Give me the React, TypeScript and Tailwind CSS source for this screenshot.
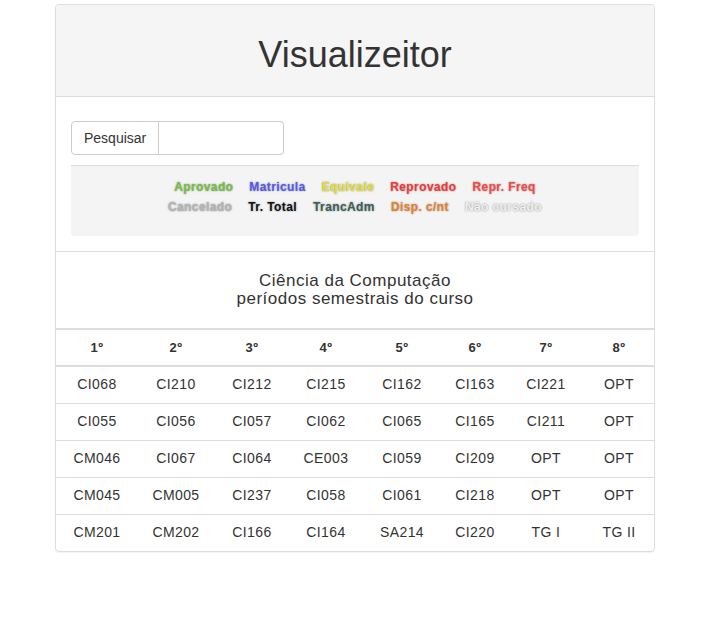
const legend1 = [
  { label: "Aprovado", color: "text-[#72c03c]" },
  { label: "Matricula", color: "text-[#5858ee]" },
  { label: "Equivale", color: "text-[#e3e030]" },
  { label: "Reprovado", color: "text-[#f03a3a]" },
  { label: "Repr. Freq", color: "text-[#f54848]" },
];

const legend2 = [
  { label: "Cancelado", color: "text-[#b4b4b4]" },
  { label: "Tr. Total", color: "text-[#111111]" },
  { label: "TrancAdm", color: "text-[#3b5f5a]" },
  { label: "Disp. c/nt", color: "text-[#e8822c]" },
  { label: "Não cursado", color: "text-[#f0f0f0]" },
];

const periodos = ["1º", "2º", "3º", "4º", "5º", "6º", "7º", "8º"];

// column widths measured from the layout
const colWidths = [82, 76, 76, 72, 80, 66, 76, 70];

const grade = [
  ["CI068", "CI210", "CI212", "CI215", "CI162", "CI163", "CI221", "OPT"],
  ["CI055", "CI056", "CI057", "CI062", "CI065", "CI165", "CI211", "OPT"],
  ["CM046", "CI067", "CI064", "CE003", "CI059", "CI209", "OPT", "OPT"],
  ["CM045", "CM005", "CI237", "CI058", "CI061", "CI218", "OPT", "OPT"],
  ["CM201", "CM202", "CI166", "CI164", "SA214", "CI220", "TG I", "TG II"],
];

const LegendRow = ({ items }: { items: { label: string; color: string }[] }) => (
  <div className="flex justify-center gap-[16px] h-[20px] leading-[20px]">
    {items.map((item) => (
      <span
        key={item.label}
        className={`${item.color} font-bold text-[12px] tracking-[0.4px] [text-shadow:0_0_2px_#888]`}
      >
        {item.label}
      </span>
    ))}
  </div>
);

export default function App() {
  return (
    <div className="min-h-[636px] bg-white font-['Liberation_Sans',Arial,sans-serif] text-[14px] text-[#333]">
      <div className="ml-[55px] w-[600px] pt-[4px]">
        <div className="border border-[#dddddd] rounded-[4px] shadow-[0_1px_1px_rgba(0,0,0,0.05)] overflow-hidden">
          {/* Heading */}
          <div className="bg-[#f5f5f5] border-b border-[#dddddd] h-[92px] flex items-center justify-center">
            <h1 className="text-[36px] leading-[40px] mt-[8px]">Visualizeitor</h1>
          </div>

          {/* Search + legend */}
          <div className="px-[15px] pt-[24px] pb-[15px] border-b border-[#dddddd]">
            <div className="flex w-[213px] h-[34px]">
              <span className="flex items-center px-[12px] border border-[#cccccc] rounded-l-[4px] bg-white text-[14px] text-[#333]">
                Pesquisar
              </span>
              <input
                className="flex-1 min-w-0 border border-l-0 border-[#cccccc] rounded-r-[4px] px-[12px] outline-none"
                type="text"
              />
            </div>
            <div className="mt-[10px] border-t border-[#dddddd] bg-[#f4f4f4] rounded-b-[4px] pt-[11px] pb-[19px]">
              <LegendRow items={legend1} />
              <LegendRow items={legend2} />
            </div>
          </div>

          {/* Curso */}
          <div className="pt-[20px] pb-[20px] text-center text-[17px] leading-[18px] tracking-[0.5px] text-[#333]">
            <div>Ciência da Computação</div>
            <div>períodos semestrais do curso</div>
          </div>

          <table className="w-full table-fixed border-collapse text-center tracking-[0.4px]">
            <colgroup>
              {colWidths.map((w, i) => (
                <col key={i} style={{ width: w }} />
              ))}
            </colgroup>
            <thead>
              <tr className="border-t-2 border-b-2 border-[#dddddd]">
                {periodos.map((p) => (
                  <th key={p} className="h-[37px] font-bold text-[13px]">
                    {p}
                  </th>
                ))}
              </tr>
            </thead>
            <tbody>
              {grade.map((row, i) => (
                <tr key={i} className={i > 0 ? "border-t border-[#dddddd]" : ""}>
                  {row.map((cell, j) => (
                    <td key={j} className="h-[37px]">
                      {cell}
                    </td>
                  ))}
                </tr>
              ))}
            </tbody>
          </table>
        </div>
      </div>
    </div>
  );
}
